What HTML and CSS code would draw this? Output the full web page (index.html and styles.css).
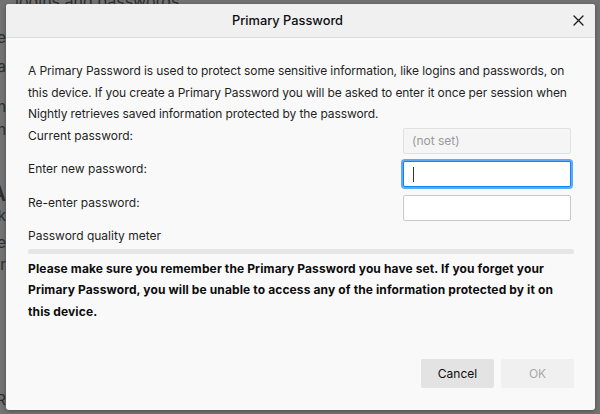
FILE: index.html
```html
<!DOCTYPE html>
<html>
<head>
<meta charset="utf-8">
<link rel="stylesheet" href="styles.css">
</head>
<body>
<div class="page">
  <div class="behind-top">logins and passwords</div>
  <div class="behind-left">
    <span class="bl l1">Use</span>
    <span class="bl l2">data</span>
    <span class="bl l3">then</span>
    <span class="bl l4">open</span>
    <span class="bl l5 big">A</span>
    <span class="bl l6">block</span>
    <span class="bl l7">site</span>
    <span class="bl l8">for</span>
    <span class="bl l9">R</span>
  </div>
  <div class="dialog">
    <div class="header">
      <div class="title">Primary Password</div>
      <button class="close" aria-label="Close">
        <svg width="11" height="11" viewBox="0 0 11 11"><path d="M1 1 L10 10 M10 1 L1 10" stroke="#1a1a1a" stroke-width="1.3" stroke-linecap="round" fill="none"/></svg>
      </button>
    </div>
    <div class="body">
      <p class="intro">A Primary Password is used to protect some sensitive information, like logins and passwords, on this device. If you create a Primary Password you will be asked to enter it once per session when Nightly retrieves saved information protected by the password.</p>
      <div class="row first">
        <label class="label">Current password:</label>
        <div class="input disabled">(not set)</div>
      </div>
      <div class="row">
        <label class="label">Enter new password:</label>
        <div class="input focused"><span class="caret"></span></div>
      </div>
      <div class="row">
        <label class="label">Re-enter password:</label>
        <div class="input"></div>
      </div>
      <div class="meter-label">Password quality meter</div>
      <div class="meter"></div>
      <p class="warning">Please make sure you remember the Primary Password you have set. If you forget your Primary Password, you will be unable to access any of the information protected by it on this device.</p>
      <div class="spacer"></div>
      <div class="buttons">
        <button class="btn cancel">Cancel</button>
        <button class="btn ok">OK</button>
      </div>
    </div>
  </div>
</div>
</body>
</html>
```

FILE: styles.css
```css
html, body {
  margin: 0;
  padding: 0;
}
body {
  width: 600px;
  height: 414px;
  overflow: hidden;
  font-family: Inter, "Liberation Sans", sans-serif;
}
.page {
  position: relative;
  width: 600px;
  height: 414px;
  background: #737373;
  overflow: hidden;
}
.behind-top {
  position: absolute;
  left: 15px;
  top: -9px;
  font-size: 16px;
  color: #2e2e2e;
}
.behind-left {
  position: absolute;
  left: -60px;
  top: 0;
  width: 66px;
  height: 414px;
  color: #2e2e2e;
  font-size: 15px;
}
.bl {
  position: absolute;
  right: 0;
  line-height: 18px;
}
.l1 { top: 29px; }
.l2 { top: 58px; }
.l3 { top: 98px; }
.l4 { top: 121px; }
.l5 { top: 183px; font-size: 21px; font-weight: 600; line-height: 22px; }
.l6 { top: 207px; }
.l7 { top: 234px; }
.l8 { top: 256px; }
.l9 { top: 391px; }
.dialog {
  position: absolute;
  left: 6px;
  top: 4px;
  width: 589px;
  height: 406px;
  background: #f9f9f9;
  border-radius: 3px;
  box-shadow: 0 1px 4px rgba(0,0,0,0.35);
  display: flex;
  flex-direction: column;
  overflow: hidden;
}
.header {
  height: 33px;
  flex: none;
  background: #f0f0f0;
  border-bottom: 1px solid #dcdcdc;
  display: flex;
  align-items: center;
}
.title {
  flex: 1;
  text-align: center;
  font-size: 12.8px;
  font-weight: 500;
  color: #0c0c0d;
  padding-left: 4px;
}
.close {
  width: 26px;
  height: 26px;
  margin-right: 4px;
  border: none;
  background: transparent;
  display: flex;
  align-items: center;
  justify-content: center;
  padding: 0;
}
.body {
  flex: 1;
  display: flex;
  flex-direction: column;
  padding: 22px 21px 22px 22px;
  font-size: 12px;
  color: #1f1f1f;
}
.intro {
  margin: 0;
  line-height: 21.5px;
  letter-spacing: -0.1px;
}
.row {
  display: flex;
  justify-content: space-between;
  align-items: flex-start;
  margin-top: 7.5px;
  padding-right: 3px;
}
.row.first {
  margin-top: 3px;
}
.label {
  line-height: 16px;
}
.input {
  width: 166px;
  height: 24px;
  border: 1px solid #c8c8c8;
  border-radius: 2px;
  background: #fff;
  box-sizing: content-box;
  font-size: 12px;
  line-height: 24px;
  padding: 0;
  position: relative;
}
.input.disabled {
  background: #f5f5f5;
  border-color: #e1e1e1;
  color: #9a9a9a;
  padding-left: 8px;
  width: 158px;
}
.input.focused {
  border-color: #0a84ff;
  box-shadow: 0 0 0 2px #5ea9f5;
}
.caret {
  position: absolute;
  left: 9px;
  top: 5px;
  width: 1px;
  height: 15px;
  background: #333;
}
.meter-label {
  margin-top: 7px;
  line-height: 16px;
}
.meter {
  margin-top: 5px;
  height: 5px;
  border-radius: 3px;
  background: #e6e6e6;
}
.warning {
  margin: 4px 0 0 0;
  font-weight: 700;
  line-height: 21.5px;
  letter-spacing: 0.12px;
  color: #0c0c0d;
}
.spacer {
  flex: 1;
}
.buttons {
  display: flex;
  justify-content: flex-end;
  gap: 7px;
}
.btn {
  width: 73px;
  height: 29px;
  border: none;
  border-radius: 2px;
  font-family: inherit;
  font-size: 12px;
  padding: 0;
}
.cancel {
  background: #e3e3e3;
  color: #0c0c0d;
}
.ok {
  background: #f0f0f0;
  color: #a8a8a8;
}
```
